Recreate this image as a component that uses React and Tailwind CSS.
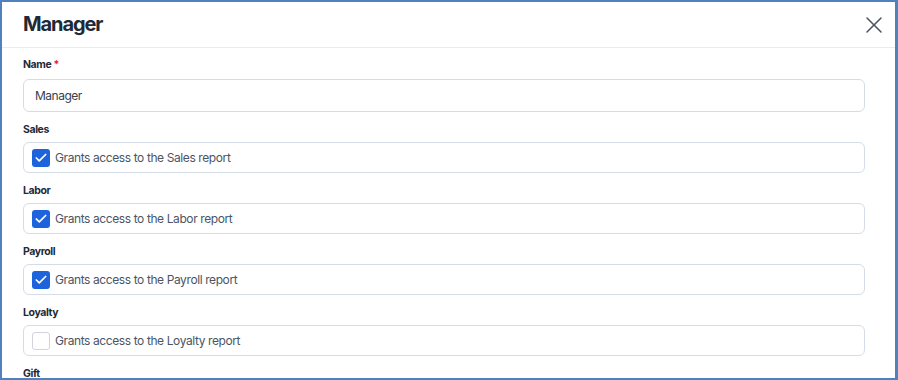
import { X, Check } from "lucide-react";

/* ======================================================
   DATA
====================================================== */

const reports = [
  { key: "Sales", checked: true },
  { key: "Labor", checked: true },
  { key: "Payroll", checked: true },
  { key: "Loyalty", checked: false },
];

/* ======================================================
   PAGE
====================================================== */

export default function App() {
  return (
    <div
      className="w-[898px] h-[380px] overflow-hidden bg-white border-2 border-r-[3px] border-[#4f81bd] text-[#1f2937]"
      style={{ fontFamily: "Inter, 'Noto Sans', sans-serif" }}
    >
      {/* HEADER */}
      <header className="h-[46px] flex items-start justify-between border-b border-[#e9ecef] pl-[21px] pr-[7px]">
        <h1 className="pt-[8px] text-[20px] leading-[28px] font-bold tracking-[-1.1px] text-[#1e2a38]">
          Manager
        </h1>
        <button className="mt-[9px] text-[#4b5563]">
          <X size={28} strokeWidth={1.3} />
        </button>
      </header>

      {/* FORM */}
      <div className="pl-[21px] pr-[30px]">
        <Label className="mt-[10px] mb-[7px]">
          Name <span className="text-[#e11d2e]">*</span>
        </Label>
        <div className="h-[33px] flex items-center rounded-[6px] border border-[#d4dde7] px-[11px] text-[12px] tracking-[-0.5px] text-[#374151]">
          Manager
        </div>

        {reports.map(r => (
          <div key={r.key}>
            <Label className="mt-[11px] mb-[5px]">{r.key}</Label>
            <div className="h-[31px] flex items-center gap-[5px] rounded-[6px] border border-[#d4dde7] pl-[8px] text-[12px] tracking-[-0.4px] text-[#4b5563]">
              <Box checked={r.checked} />
              <span>Grants access to the {r.key} report</span>
            </div>
          </div>
        ))}

        <Label className="mt-[11px]">Gift</Label>
      </div>
    </div>
  );
}

/* ======================================================
   SMALL UI
====================================================== */

function Label({ children, className }) {
  return (
    <p className={`text-[10.5px] leading-[14px] font-bold tracking-[-0.4px] text-[#1f2937] ${className}`}>
      {children}
    </p>
  );
}

function Box({ checked }) {
  if (!checked) {
    return (
      <span className="w-[18px] h-[18px] rounded-[3px] border border-[#d1d5db] bg-white" />
    );
  }
  return (
    <span className="w-[18px] h-[18px] rounded-[3px] bg-[#1d63dc] flex items-center justify-center text-white">
      <Check size={14} strokeWidth={3} />
    </span>
  );
}
